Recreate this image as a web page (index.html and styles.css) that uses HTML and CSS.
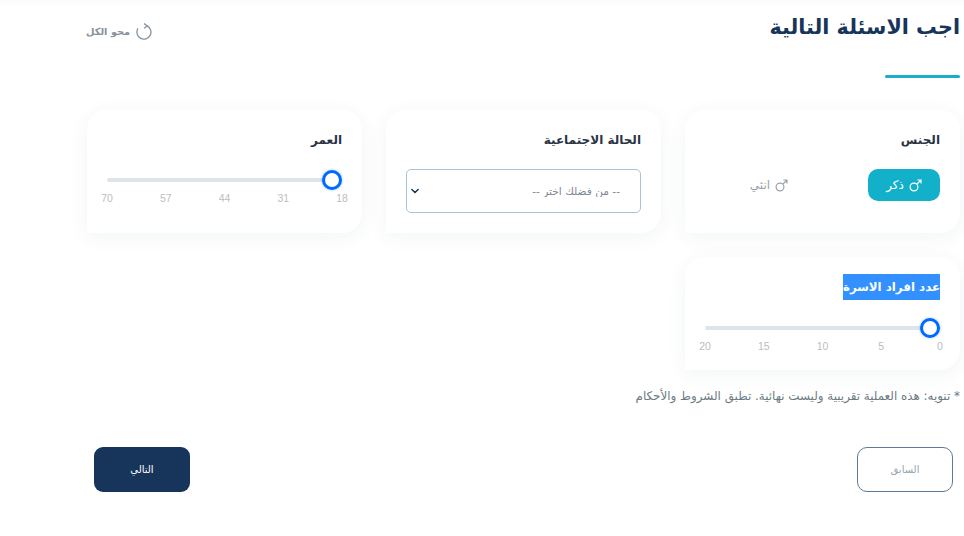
FILE: index.html
```html
<!DOCTYPE html>
<html lang="ar" dir="rtl">

<head>
    <meta charset="UTF-8">
    <meta name="viewport" content="width=device-width, initial-scale=1.0">
    <title>اجب الاسئلة التالية</title>
    <link rel="stylesheet" href="styles.css">
</head>

<body>
    <div class="top-shadow"></div>
    <div class="container">
        <div class="header">
            <div>
                <h1>اجب الاسئلة التالية</h1>
                <div class="underline"></div>
            </div>
            <button class="reset">
                <svg width="18" height="18" viewBox="0 0 18 18" fill="none" stroke="#87929c" stroke-width="1.3">
                    <path d="M12 3.8A7 7 0 1 1 3 6.4" />
                    <path d="M9 1.6L12.2 4 9 6.2" />
                </svg>
                <span>محو الكل</span>
            </button>
        </div>

        <div class="cards">
            <div class="card">
                <h2>الجنس</h2>
                <div class="gender">
                    <button class="gender-btn active">
                        <svg class="male" width="13" height="13" viewBox="0 0 13 13" fill="none" stroke="currentColor" stroke-width="1.2">
                            <circle cx="5" cy="8" r="3.9" />
                            <path d="M7.9 5.1L12 1M8.4 1H12V4.6" />
                        </svg>
                        <span>ذكر</span>
                    </button>
                    <button class="gender-btn">
                        <svg class="male" width="13" height="13" viewBox="0 0 13 13" fill="none" stroke="currentColor" stroke-width="1.2">
                            <circle cx="5" cy="8" r="3.9" />
                            <path d="M7.9 5.1L12 1M8.4 1H12V4.6" />
                        </svg>
                        <span>انثي</span>
                    </button>
                </div>
            </div>

            <div class="card">
                <h2>الحالة الاجتماعية</h2>
                <select class="select">
                    <option>-- من فضلك اختر --</option>
                </select>
            </div>

            <div class="card">
                <h2>العمر</h2>
                <input class="range" type="range" min="18" max="70" value="18">
                <div class="ticks">
                    <span>18</span><span>31</span><span>44</span><span>57</span><span>70</span>
                </div>
            </div>

            <div class="card">
                <h2><span class="selected">عدد افراد الاسرة</span></h2>
                <input class="range family" type="range" min="0" max="20" value="0">
                <div class="ticks">
                    <span>0</span><span>5</span><span>10</span><span>15</span><span>20</span>
                </div>
            </div>
        </div>

        <p class="note">* تنويه: هذه العملية تقريبية وليست نهائية. تطبق الشروط والأحكام</p>

        <div class="nav">
            <button class="prev">السابق</button>
            <button class="next">التالي</button>
        </div>
    </div>
</body>

</html>
```

FILE: styles.css
```css
* {
    box-sizing: border-box;
}

body {
    font-family: "DejaVu Sans", "Noto Sans", sans-serif;
    background-color: white;
    margin: 0;
    height: 536px;
    overflow: hidden;
}

button {
    font-family: inherit;
    cursor: pointer;
}

.top-shadow {
    height: 3px;
    background: #fbfcfc;
    box-shadow: 0 1px 4px rgba(0, 0, 0, 0.03);
}

.container {
    padding: 9px 4px 0 87px;
}

.header {
    display: flex;
    justify-content: space-between;
    align-items: flex-start;
}

h1 {
    margin: 0;
    font-size: 20.7px;
    line-height: 30px;
    font-weight: 600;
    color: #17355a;
}

.underline {
    width: 75px;
    height: 3px;
    margin-top: 33px;
    border-radius: 2px;
    background: #1aaec8;
}

.reset {
    display: flex;
    align-items: center;
    gap: 5px;
    margin: 10px 0 0 -1px;
    padding: 0;
    background: none;
    border: none;
    color: #87929c;
    font-size: 9.8px;
    font-weight: bold;
    white-space: nowrap;
}

.cards {
    display: grid;
    grid-template-columns: repeat(3, 275px);
    gap: 24px;
    margin-top: 32px;
}

.card {
    padding: 18px 20px 20px;
    height: 123px;
    background: white;
    border-radius: 20px 20px 20px 0;
    box-shadow: 0 4px 20px rgba(30, 60, 90, 0.06);
}

.card:nth-child(4) {
    height: 113px;
}

h2 {
    margin: 0;
    font-size: 12px;
    line-height: 24px;
    font-weight: 600;
    color: #2a3344;
}

.selected {
    display: inline-block;
    height: 26px;
    line-height: 26px;
    margin: -1px 0 -2px;
    font-size: 11.8px;
    background: #3390ff;
    color: white;
}

.gender {
    display: flex;
    gap: 63px;
    margin-top: 17px;
}

.gender-btn {
    display: flex;
    align-items: center;
    justify-content: center;
    gap: 5px;
    width: 72px;
    height: 32px;
    padding: 0;
    border: none;
    border-radius: 10px;
    background: none;
    color: #98a2aa;
    font-size: 12px;
}

.gender-btn.active {
    background: #13b1c9;
    color: white;
}

.select {
    display: block;
    width: 235px;
    height: 44px;
    margin-top: 17px;
    padding: 0 20px 0 30px;
    appearance: none;
    font-family: inherit;
    font-size: 10.6px;
    color: #7d8893;
    background: white url("data:image/svg+xml,%3Csvg xmlns='http://www.w3.org/2000/svg' viewBox='0 0 16 16'%3E%3Cpath fill='none' stroke='%23143554' stroke-linecap='round' stroke-linejoin='round' stroke-width='2.4' d='M3 5.5l5 5 5-5'/%3E%3C/svg%3E") no-repeat left 3px center / 10px 10px;
    border: 1px solid #a9c5d3;
    border-radius: 5px;
}

.range {
    display: block;
    width: 235px;
    height: 20px;
    margin: 18px 0 0;
    appearance: none;
    background: none;
}

.range.family {
    margin-top: 19px;
}

.range::-webkit-slider-runnable-track {
    height: 4px;
    border-radius: 2px;
    background: #dfe4ec;
}

.range::-webkit-slider-thumb {
    appearance: none;
    width: 20px;
    height: 20px;
    margin-top: -8px;
    border: 3px solid #0069ff;
    border-radius: 50%;
    background: white;
    box-shadow: 0 0 3px rgba(0, 105, 255, 0.4);
}

.ticks {
    display: flex;
    justify-content: space-between;
    margin-top: 1px;
    font-family: "Liberation Sans", Arial, sans-serif;
    font-size: 10.5px;
    line-height: 14px;
    color: #bdbdbd;
}

.ticks span {
    display: flex;
    justify-content: center;
    width: 0;
}

.note {
    margin: 17px 0 0;
    font-size: 11.9px;
    line-height: 18px;
    color: #6c7a82;
}

.nav {
    display: flex;
    justify-content: space-between;
    margin: 42px 7px 0 7px;
}

.nav button {
    width: 96px;
    height: 45px;
    font-size: 10px;
}

.prev {
    background: white;
    color: #98a4b0;
    border: 1px solid #5f7a94;
    border-radius: 10px;
}

.next {
    background: #17355a;
    color: white;
    border: none;
    border-radius: 9px;
}
```
